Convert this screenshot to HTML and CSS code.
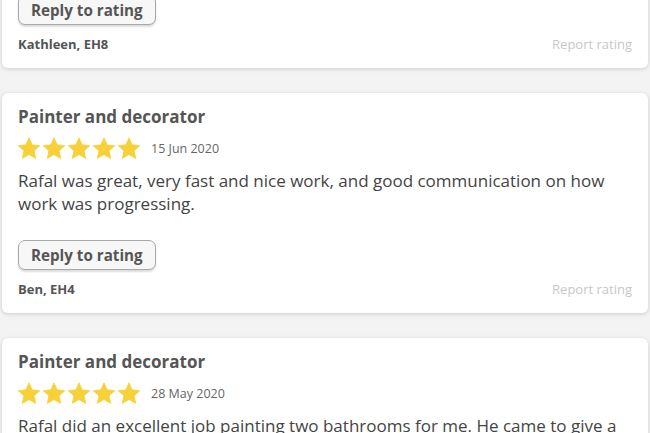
FILE: index.html
```html
<!DOCTYPE html>
<html lang="en">
<head>
    <meta charset="UTF-8">
    <meta name="viewport" content="width=device-width, initial-scale=1.0">
    <title>Ratings</title>
    <link rel="stylesheet" href="styles.css">
</head>
<body>

    <svg width="0" height="0" class="defs">
        <defs>
            <symbol id="star" viewBox="1.2 1.2 21.6 20.8">
                <path d="M12 1.6l3.1 6.9 7.5.8-5.6 5.1 1.6 7.4L12 18l-6.6 3.8 1.6-7.4-5.6-5.1 7.5-.8z" stroke-linejoin="round" stroke-width="0.8"/>
            </symbol>
        </defs>
    </svg>

    <div class="reviews">

        <div class="review review-cut">
            <button type="button" class="replyButton">Reply to rating</button>
            <div class="review-footer">
                <span class="reviewer">Kathleen, EH8</span>
                <a class="report" href="#">Report rating</a>
            </div>
        </div>

        <div class="review">
            <h3 class="review-title">Painter and decorator</h3>
            <div class="rating-row">
                <div class="stars">
                    <svg><use href="#star"/></svg>
                    <svg><use href="#star"/></svg>
                    <svg><use href="#star"/></svg>
                    <svg><use href="#star"/></svg>
                    <svg><use href="#star"/></svg>
                </div>
                <span class="review-date">15 Jun 2020</span>
            </div>
            <p class="review-text">Rafal was great, very fast and nice work, and good communication on how work was progressing.</p>
            <button type="button" class="replyButton">Reply to rating</button>
            <div class="review-footer">
                <span class="reviewer">Ben, EH4</span>
                <a class="report" href="#">Report rating</a>
            </div>
        </div>

        <div class="review">
            <h3 class="review-title">Painter and decorator</h3>
            <div class="rating-row">
                <div class="stars">
                    <svg><use href="#star"/></svg>
                    <svg><use href="#star"/></svg>
                    <svg><use href="#star"/></svg>
                    <svg><use href="#star"/></svg>
                    <svg><use href="#star"/></svg>
                </div>
                <span class="review-date">28 May 2020</span>
            </div>
            <p class="review-text">Rafal did an excellent job painting two bathrooms for me. He came to give a quote and was very clear about the work.</p>
        </div>

    </div>

</body>
</html>
```

FILE: styles.css
```css
body {
    margin: 0;
    padding: 0 2px;
    background-color: #f3f3f3;
    font-family: 'Open Sans', sans-serif;
    color: #444;
    overflow: hidden;
}

.defs {
    position: absolute;
}

.reviews {
    display: flex;
    flex-direction: column;
    gap: 25px;
    margin-top: -19px;
}

.review {
    background-color: #fff;
    border-radius: 6px;
    box-shadow: 0 1px 4px rgba(0, 0, 0, 0.16);
    padding: 14px 16px 16px;
}

.review-title {
    margin: 0;
    font-size: 17px;
    line-height: 20px;
    font-weight: 700;
    color: #555;
}

.rating-row {
    display: flex;
    align-items: center;
    gap: 11px;
    margin-top: 10px;
}

.stars {
    display: flex;
    gap: 3px;
}

.stars svg {
    width: 22px;
    height: 22px;
    fill: #f6d13a;
    stroke: #f6d13a;
}

.review-date {
    font-size: 12.5px;
    color: #666;
}

.review-text {
    margin: 10px 0 0;
    padding-right: 14px;
    font-size: 17px;
    line-height: 23px;
    color: #444;
}

.replyButton {
    display: block;
    height: 30px;
    margin-top: 25px;
    padding: 0 12px;
    border: 1px solid #a9a9a9;
    border-radius: 7px;
    background: #f7f7f7;
    box-shadow: 0 2px 2px rgba(0, 0, 0, 0.14);
    font-family: 'Open Sans', sans-serif;
    font-weight: 700;
    font-size: 15.2px;
    color: #555;
    cursor: pointer;
}

.review-cut .replyButton {
    margin-top: 0;
}

.review-footer {
    display: flex;
    justify-content: space-between;
    align-items: center;
    margin-top: 11px;
    line-height: 16px;
}

.reviewer {
    font-size: 13px;
    font-weight: 700;
    color: #555;
}

.report {
    font-size: 13px;
    color: #c8c8c8;
    text-decoration: none;
}
```
